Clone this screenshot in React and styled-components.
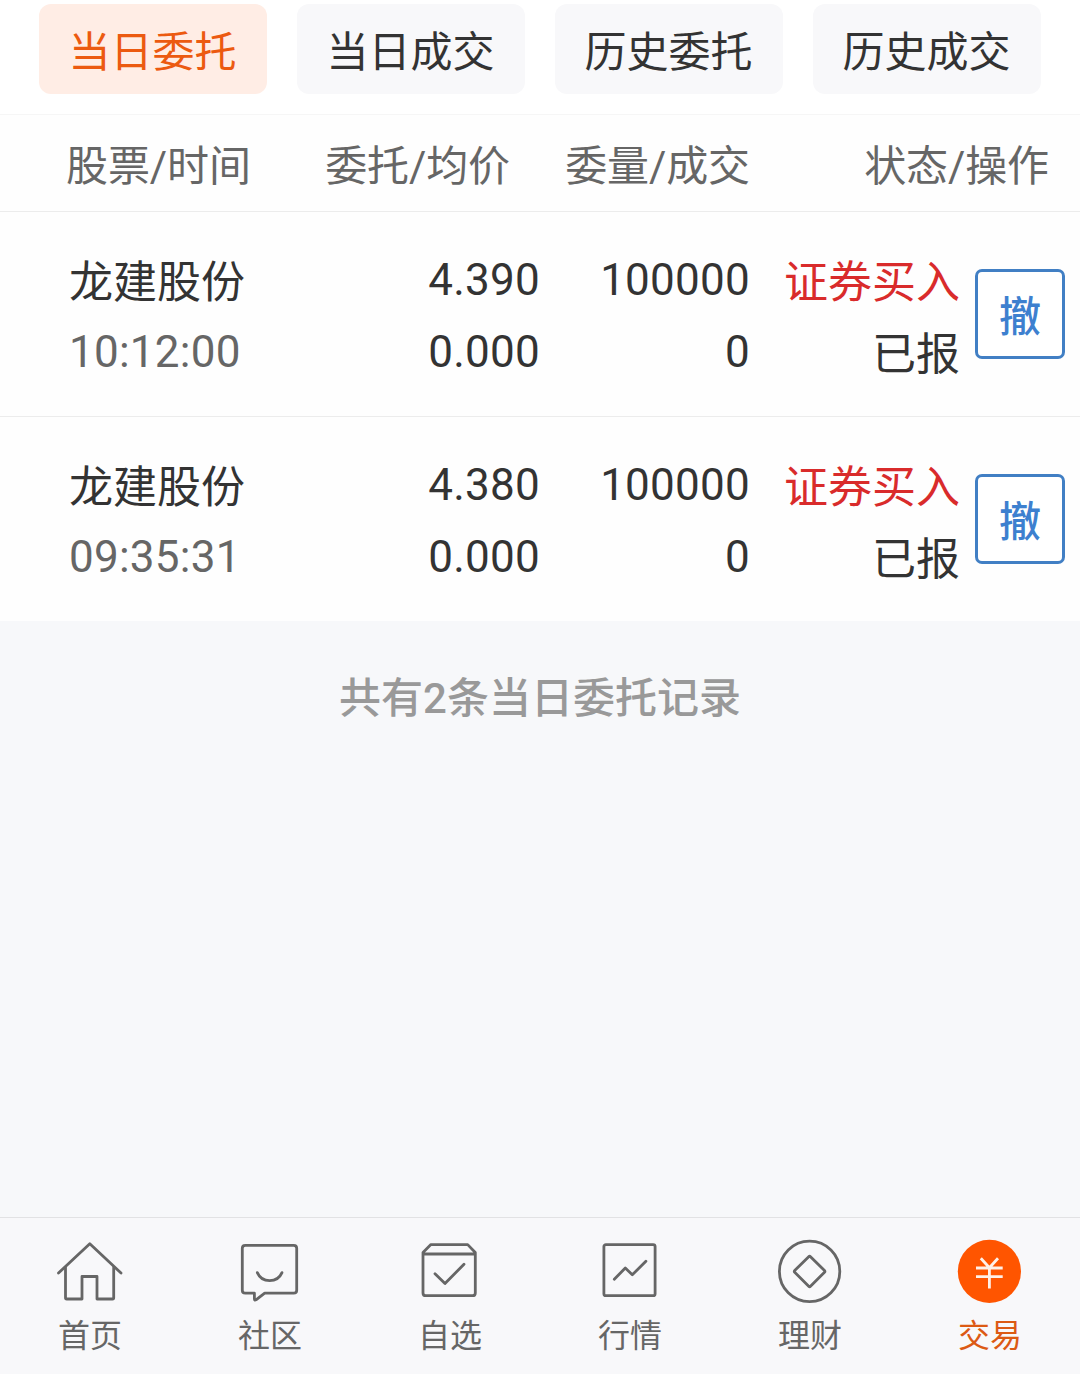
import React, { useState } from 'react'
import styled, { createGlobalStyle } from 'styled-components'

const GlobalStyle = createGlobalStyle`
  * {
    box-sizing: border-box;
  }

  body {
    margin: 0;
    background: #f7f8fa;
    font-family: Roboto, "Noto Sans CJK SC", sans-serif;
    color: #333;
  }

  button {
    font-family: inherit;
    padding: 0;
    border: 0;
  }
`

const Page = styled.div`
  display: flex;
  flex-direction: column;
  width: 1080px;
  height: 1374px;
  overflow: hidden;
`

const Tabs = styled.div`
  display: flex;
  gap: 30px;
  height: 115px;
  padding: 4px 39px 0;
  background: #fff;
  border-bottom: 1px solid #f6f6f6;
`

const Tab = styled.button`
  width: 228px;
  height: 90px;
  padding: 8px 1px 0 0;
  border-radius: 12px;
  font-size: 42px;
  line-height: 82px;
  white-space: nowrap;
  color: ${({ $active }) => ($active ? '#ec5a10' : '#333')};
  background: ${({ $active }) => ($active ? '#ffede5' : '#f8f8fa')};
`

const TableHead = styled.div`
  display: grid;
  grid-template-columns: 210px 234px 240px 299px;
  height: 97px;
  padding: 3px 0 0 66px;
  background: #fefefe;
  border-bottom: 1px solid #ececec;
  font-size: 42px;
  line-height: 98px;
  letter-spacing: -0.1px;
  color: #666;
  white-space: nowrap;
`

const HeadCell = styled.div`
  text-align: ${({ $left }) => ($left ? 'left' : 'right')};
`

const Row = styled.div`
  display: grid;
  grid-template-columns: 230px 241px 210px 210px 90px;
  align-items: start;
  height: ${({ $last }) => ($last ? 204 : 205)}px;
  padding: 32px 0 0 69px;
  background: #fefefe;
  border-bottom: ${({ $last }) => ($last ? '0' : '1px solid #ececec')};
`

const Cell = styled.div`
  display: flex;
  flex-direction: column;
  align-items: ${({ $left }) => ($left ? 'flex-start' : 'flex-end')};
`

const Line = styled.span`
  height: 72px;
  font-size: 44px;
  line-height: 72px;
  color: ${({ $color }) => $color || '#333'};
  white-space: nowrap;
`

const NumLine = styled(Line)`
  letter-spacing: 0.25px;
`

const TextLine = styled(Line)`
  padding-top: 3px;
`

const CancelButton = styled.button`
  width: 90px;
  height: 90px;
  margin: 25px 0 0 15px;
  padding-top: 8px;
  border: 3px solid #417fc4;
  border-radius: 7px;
  background: #fff;
  color: #3d80cf;
  font-size: 42px;
  font-weight: 500;
  line-height: 76px;
`

const Summary = styled.div`
  flex: 1;
  padding-top: 48px;
  text-align: center;
  font-size: 42px;
  font-weight: 500;
  line-height: 60px;
  color: #999;
`

const BottomBar = styled.nav`
  display: grid;
  grid-template-columns: repeat(6, 1fr);
  height: 157px;
  background: #f8f8fa;
  border-top: 1px solid #e2e2e4;
`

const NavItem = styled.div`
  display: flex;
  flex-direction: column;
  align-items: center;
  padding-top: 18px;
  font-size: 32px;
  line-height: 48px;
  color: ${({ $active }) => ($active ? '#dc5a14' : '#666')};

  span {
    margin-top: 4px;
  }
`

const Icon = styled.svg`
  display: block;
  width: 72px;
  height: 72px;
  fill: none;
  stroke: #666;
  stroke-width: 2.8;
  stroke-linecap: round;
  stroke-linejoin: round;
`

const HomeIcon = () => (
  <Icon viewBox="0 0 72 72">
    <path d="M4.5 37 35.8 7.8 67 37" />
    <path d="M11.5 31.5V61.8Q11.5 63 12.7 63H28V40.5H43V63H58.5Q59.7 63 59.7 61.8V31.5" />
  </Icon>
)

const ChatIcon = () => (
  <Icon viewBox="0 0 72 72">
    <path d="M11.3 9.3H59.7Q62.7 9.3 62.7 12.3V54.2Q62.7 57.2 59.7 57.2H30.7L22 63.9Q20.4 64.8 20.4 62.8V57.2H11.3Q8.3 57.2 8.3 54.2V12.3Q8.3 9.3 11.3 9.3Z" />
    <path d="M23.3 36.6C28 47.3 43.3 47.3 48 36.6" />
  </Icon>
)

const BoxIcon = () => (
  <Icon viewBox="0 0 72 72">
    <path d="M9 16.5 16.9 8.6H53.7L61.3 16.5V56.9Q61.3 59.7 58.5 59.7H11.8Q9 59.7 9 56.9ZM9 18H61.3" />
    <path d="M21 37.7 31 47.6 50 28.2" />
  </Icon>
)

const TrendIcon = () => (
  <Icon viewBox="0 0 72 72">
    <rect x="9.9" y="8.6" width="51.2" height="51.1" rx="2" />
    <path d="M20.3 43.2 31.3 32 38.3 38.8 51.9 25.3" />
  </Icon>
)

const CoinIcon = () => (
  <Icon viewBox="0 0 72 72">
    <circle cx="35.6" cy="35.4" r="30.2" />
    <path d="M34.7 20.7Q35.6 19.8 36.5 20.7L50.5 34.5Q51.4 35.4 50.5 36.3L36.5 50.3Q35.6 51.2 34.7 50.3L20.7 36.3Q19.8 35.4 20.7 34.5Z" />
  </Icon>
)

const TradeIcon = () => (
  <Icon viewBox="0 0 72 72">
    <circle cx="35.4" cy="35.4" r="31.6" fill="#ff5500" stroke="none" />
    <path
      d="M26.8 22.3 35.4 31.8 44 22.3M22 32H48.7M22 40.7H48.7M35.4 31.8V52.4"
      stroke="#fff0e8"
      strokeLinecap="butt"
    />
  </Icon>
)

const tabs = ['当日委托', '当日成交', '历史委托', '历史成交']

const orders = [
  { name: '龙建股份', time: '10:12:00', price: '4.390', avg: '0.000', qty: '100000', filled: '0' },
  { name: '龙建股份', time: '09:35:31', price: '4.380', avg: '0.000', qty: '100000', filled: '0' },
]

const navItems = [
  { label: '首页', icon: HomeIcon },
  { label: '社区', icon: ChatIcon },
  { label: '自选', icon: BoxIcon },
  { label: '行情', icon: TrendIcon },
  { label: '理财', icon: CoinIcon },
  { label: '交易', icon: TradeIcon, active: true },
]

const App = () => {
  const [current, setCurrent] = useState(0)

  return (
    <Page>
      <GlobalStyle />
      <Tabs>
        {tabs.map((tab, i) => (
          <Tab key={tab} $active={i === current} onClick={() => setCurrent(i)}>
            {tab}
          </Tab>
        ))}
      </Tabs>

      <TableHead>
        <HeadCell $left>股票/时间</HeadCell>
        <HeadCell>委托/均价</HeadCell>
        <HeadCell>委量/成交</HeadCell>
        <HeadCell>状态/操作</HeadCell>
      </TableHead>

      {orders.map((order, i) => (
        <Row key={order.time} $last={i === orders.length - 1}>
          <Cell $left>
            <TextLine>{order.name}</TextLine>
            <NumLine $color="#666">{order.time}</NumLine>
          </Cell>
          <Cell>
            <NumLine>{order.price}</NumLine>
            <NumLine>{order.avg}</NumLine>
          </Cell>
          <Cell>
            <NumLine>{order.qty}</NumLine>
            <NumLine>{order.filled}</NumLine>
          </Cell>
          <Cell>
            <TextLine $color="#d92b2b">证券买入</TextLine>
            <TextLine>已报</TextLine>
          </Cell>
          <CancelButton>撤</CancelButton>
        </Row>
      ))}

      <Summary>共有2条当日委托记录</Summary>

      <BottomBar>
        {navItems.map(({ label, icon: NavIcon, active }) => (
          <NavItem key={label} $active={active}>
            <NavIcon />
            <span>{label}</span>
          </NavItem>
        ))}
      </BottomBar>
    </Page>
  )
}

export default App
